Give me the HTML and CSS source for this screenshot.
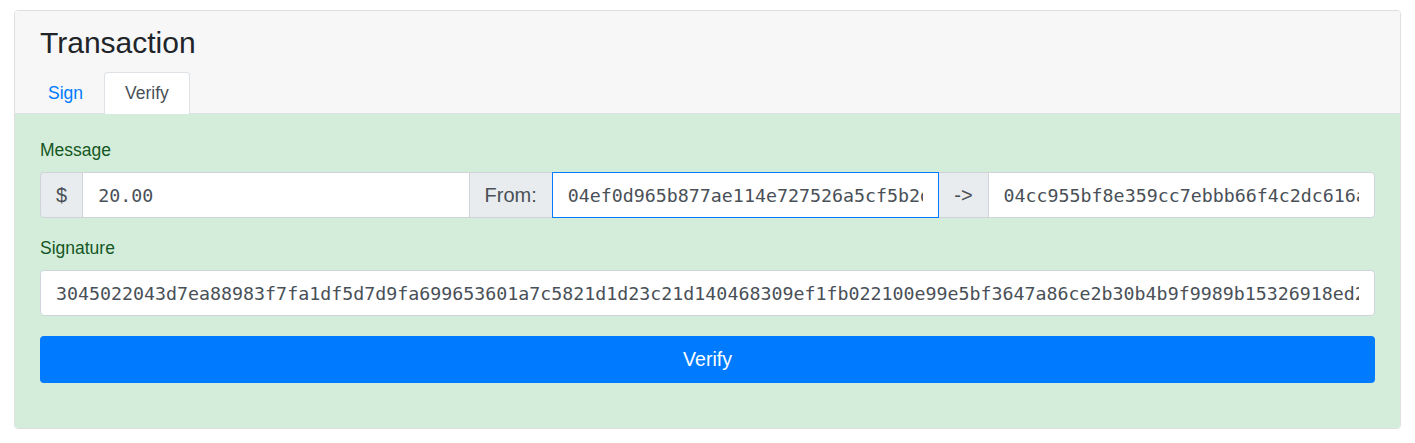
FILE: index.html
```html
<!DOCTYPE html>
<html>
<head>
<meta charset="utf-8">
<link rel="stylesheet" href="styles.css">
</head>
<body>
<div class="card">
  <div class="card-header">
    <h3 class="title">Transaction</h3>
    <ul class="tabs">
      <li><a class="tab-link">Sign</a></li>
      <li><a class="tab-link active">Verify</a></li>
    </ul>
  </div>
  <div class="card-body">
    <label class="field-label">Message</label>
    <div class="input-group">
      <span class="addon addon-dollar">$</span>
      <input class="field" type="text" value="20.00">
      <span class="addon">From:</span>
      <input class="field focused" type="text" value="04ef0d965b877ae114e727526a5cf5b2d8b6c1a0e3f4d7a9c2b1e0f3a4d5c6b7e8f9">
      <span class="addon">-&gt;</span>
      <input class="field last" type="text" value="04cc955bf8e359cc7ebbb66f4c2dc616a3b9d0e1f2c3a4b5d6e7f8091a2b3c4d5e6f">
    </div>
    <label class="field-label sig-label">Signature</label>
    <input class="field single" type="text" value="3045022043d7ea88983f7fa1df5d7d9fa699653601a7c5821d1d23c21d140468309ef1fb022100e99e5bf3647a86ce2b30b4b9f9989b15326918ed2a7b8c9d0e1f">
    <button class="btn">Verify</button>
  </div>
</div>
</body>
</html>
```
FILE: styles.css
```css
html, body {
  margin: 0;
  padding: 0;
  background: #fff;
}
body {
  padding: 10px 14px 0 14px;
  font-family: "Liberation Sans", Arial, sans-serif;
  color: #212529;
}
.card {
  border: 1px solid #dfdfdf;
  border-radius: 4px;
  overflow: hidden;
  width: 1385px;
}
.card-header {
  background: #f7f7f7;
  border-bottom: 1px solid #dee2e6;
  padding: 14px 25px 0 25px;
}
.title {
  margin: 0 0 12px 0;
  font-weight: 400;
  font-size: 30px;
  line-height: 35px;
  color: #212529;
}
.tabs {
  list-style: none;
  margin: 0 0 -1px -13px;
  padding: 0;
  display: flex;
}
.tab-link {
  display: block;
  padding: 8px 20px;
  font-size: 17.5px;
  line-height: 25px;
  color: #007bff;
  border: 1px solid transparent;
  border-bottom: 0;
  border-radius: 4px 4px 0 0;
  cursor: pointer;
}
.tab-link.active {
  color: #495057;
  background: #fff;
  border-color: #dee2e6;
}
.card-body {
  background: #d4edda;
  padding: 24px 25px 45px 25px;
  display: flex;
  flex-direction: column;
}
.field-label {
  font-size: 17.5px;
  line-height: 25px;
  color: #155724;
  margin-bottom: 9px;
}
.sig-label {
  margin-top: 18px;
}
.input-group {
  display: flex;
  height: 46px;
}
.addon {
  display: flex;
  align-items: center;
  background: #e9ecef;
  border: 1px solid #ced4da;
  color: #495057;
  font-size: 20px;
  padding: 0 15px;
  margin-left: -1px;
}
.addon-dollar {
  margin-left: 0;
  border-radius: 4px 0 0 4px;
  padding: 0 15px;
}
.field {
  flex: 1 1 0;
  min-width: 0;
  box-sizing: border-box;
  height: 46px;
  margin: 0 0 0 -1px;
  border: 1px solid #ced4da;
  background: #fff;
  color: #495057;
  font-family: "DejaVu Sans Mono", monospace;
  font-size: 18.3px;
  padding: 0 15px;
  outline: none;
}
.field.focused {
  border-color: #007bff;
  position: relative;
  z-index: 1;
}
.field.last {
  border-radius: 0 4px 4px 0;
}
.field.single {
  flex: none;
  width: 100%;
  margin: 0;
  border-radius: 4px;
}
.btn {
  margin-top: 20px;
  height: 47px;
  border: 0;
  border-radius: 4px;
  background: #007bff;
  color: #fff;
  font-family: "Liberation Sans", Arial, sans-serif;
  font-size: 19.5px;
}
```
